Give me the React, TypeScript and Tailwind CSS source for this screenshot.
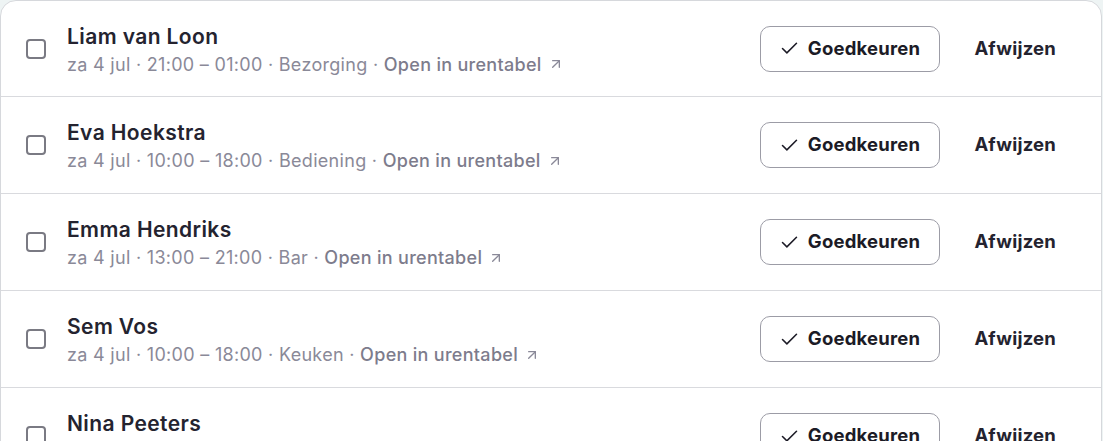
import React from 'react';
import { Check, ArrowUpRight } from 'lucide-react';

type Entry = {
  name: string;
  time: string;
  role: string;
};

const entries: Entry[] = [
  { name: 'Liam van Loon', time: '21:00 – 01:00', role: 'Bezorging' },
  { name: 'Eva Hoekstra', time: '10:00 – 18:00', role: 'Bediening' },
  { name: 'Emma Hendriks', time: '13:00 – 21:00', role: 'Bar' },
  { name: 'Sem Vos', time: '10:00 – 18:00', role: 'Keuken' },
  { name: 'Nina Peeters', time: '10:00 – 18:00', role: 'Bediening' },
];

const Row: React.FC<{ entry: Entry; first?: boolean }> = ({ entry, first }) => (
  <div
    className={
      first
        ? 'flex items-center h-[96px] shrink-0 pl-[25px] pr-[25px] border-b border-[#d9dade]'
        : 'flex items-center h-[97px] shrink-0 pl-[25px] pr-[25px] border-b border-[#d9dade]'
    }
  >
    <div className="w-[20px] h-[20px] rounded-[4px] border-2 border-[#7a7a83] bg-white shrink-0" />
    <div className="ml-[21px] flex flex-col flex-1 min-w-0 pt-[3px]">
      <span className="text-[21px] leading-[28px] font-semibold text-[#24232f] tracking-[0.4px]">
        {entry.name}
      </span>
      <span className="text-[18px] leading-[27px] text-[#8a8998] tracking-[0.3px] flex items-center">
        za 4 jul · {entry.time} · {entry.role} ·&nbsp;
        <span className="font-medium text-[#7d7c8c]">Open in urentabel</span>
        <ArrowUpRight className="ml-[6px] text-[#8a8998]" size={16} strokeWidth={2} />
      </span>
    </div>
    <div className="flex items-center gap-[15px]">
      <button className="flex items-center justify-center gap-[8px] w-[180px] h-[46px] rounded-[10px] border border-[#9c9ca6] bg-white text-[18.5px] font-bold text-[#1c1b26] tracking-[0.2px]">
        <Check size={21} strokeWidth={1.75} />
        Goedkeuren
      </button>
      <button className="h-[46px] px-[20px] text-[18.5px] font-bold text-[#24232f] tracking-[0.2px]">
        Afwijzen
      </button>
    </div>
  </div>
);

export default function App() {
  return (
    <div
      className="w-[1103px] h-[441px] overflow-hidden bg-[#eef4f4]"
      style={{ fontFamily: 'Inter, "Noto Sans", sans-serif' }}
    >
      <div className="w-[1102px] h-[470px] bg-white border border-[#d6d8dc] rounded-t-[16px] flex flex-col overflow-hidden">
        {entries.map((e, i) => (
          <Row key={e.name} entry={e} first={i === 0} />
        ))}
      </div>
    </div>
  );
}
